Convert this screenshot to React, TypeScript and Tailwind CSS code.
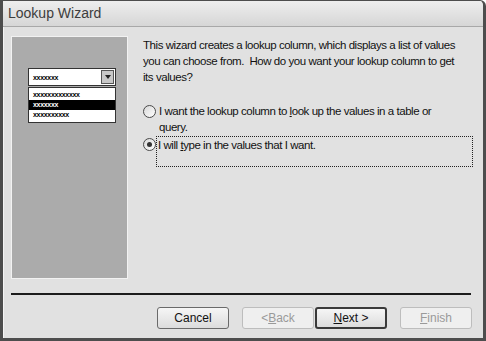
import React from 'react';

const font = { fontFamily: '"Liberation Sans", Arial, sans-serif' };

function Radio({ checked }: { checked?: boolean }) {
  return (
    <span className="mt-[2px] flex h-[13px] w-[13px] shrink-0 items-center justify-center rounded-full border border-[#4a4a4a] bg-gradient-to-br from-[#d8d8d8] to-white">
      {checked && <span className="h-[5px] w-[5px] rounded-full bg-[#333]" />}
    </span>
  );
}

function Button({ children, disabled, primary }: { children: React.ReactNode; disabled?: boolean; primary?: boolean }) {
  const base = 'flex h-[22px] w-[72px] shrink-0 items-center justify-center rounded-[3px] text-[12px]';
  if (disabled) {
    return <div className={`${base} border border-[#bdbdbd] bg-[#efefef] text-[#9a9a9a]`}>{children}</div>;
  }
  return (
    <div
      className={`${base} bg-gradient-to-b from-[#f6f6f6] to-[#dcdcdc] text-[#111] ${
        primary ? 'border-2 border-[#3a3a3a]' : 'border border-[#6a6a6a]'
      }`}
    >
      {children}
    </div>
  );
}

export default function App() {
  return (
    <div style={font} className="flex h-[341px] w-[486px] flex-col overflow-hidden rounded-tr-[6px] border-x-[3px] border-b-[3px] border-t border-[#4d4d4d] bg-[#e1e1e1]">
      {/* title bar */}
      <div className="flex h-[26px] shrink-0 items-center border-b border-[#a8a8a8] bg-gradient-to-b from-[#eeeeee] to-[#d6d6d6] pl-[5px] text-[14px] text-[#3d3d3d]">
        Lookup Wizard
      </div>

      <div className="flex flex-1 flex-col border-l border-[#f4f4f4] pl-[7px] pr-[10px] pt-[9px]">
        <div className="flex gap-[15px]">
          {/* picture panel */}
          <div className="h-[243px] w-[117px] shrink-0 border border-[#f2f2f2] bg-[#ababab] pl-[16px] pt-[31px]">
            <div className="flex h-[18px] w-[88px] items-center border border-[#333] bg-white">
              <span className="flex-1 pl-[4px] text-[7px] font-bold leading-none tracking-[-0.3px] text-black">xxxxxxx</span>
              <span className="mr-[1px] flex h-[14px] w-[13px] items-center justify-center border border-[#555] bg-[#c8c8c8]">
                <span className="h-0 w-0 border-x-[3px] border-t-[4px] border-x-transparent border-t-[#222]" />
              </span>
            </div>
            <div className="mt-[1px] flex w-[88px] flex-col border border-[#333] bg-white py-[2px] text-[7px] font-bold leading-[10px] tracking-[-0.3px]">
              <span className="pl-[4px] text-black">xxxxxxxxxxxxx</span>
              <span className="bg-black pl-[4px] text-white">xxxxxxx</span>
              <span className="pl-[4px] text-black">xxxxxxxxxx</span>
            </div>
          </div>

          {/* content */}
          <div className="flex flex-1 flex-col pt-[1px] text-[11.5px] leading-[16px] tracking-[-0.45px] text-[#111]">
            <p className="pr-[16px]">
              This wizard creates a lookup column, which displays a list of values you can choose from.&nbsp; How do you want your lookup column to get its values?
            </p>
            <div className="mt-[18px] flex gap-[3px]">
              <Radio />
              <span className="pr-[20px]">I want the lookup column to <u>l</u>ook up the values in a table or query.</span>
            </div>
            <div className="mt-[1px] flex">
              <Radio checked />
              <div className="h-[31px] flex-1 border border-dotted border-[#222] pl-[1px]">
                I will <u>t</u>ype in the values that I want.
              </div>
            </div>
          </div>
        </div>

        <div className="mt-[14px] h-[2px] w-[460px] bg-[#1c1c1c]" />

        <div className="mt-[12px] flex pl-[146px]">
          <Button>Cancel</Button>
          <div className="ml-[13px]">
            <Button disabled>
              &lt; <u>B</u>ack
            </Button>
          </div>
          <div className="ml-[1px]">
            <Button primary>
              <u>N</u>ext &gt;
            </Button>
          </div>
          <div className="ml-[13px]">
            <Button disabled>
              <u>F</u>inish
            </Button>
          </div>
        </div>
      </div>
    </div>
  );
}
